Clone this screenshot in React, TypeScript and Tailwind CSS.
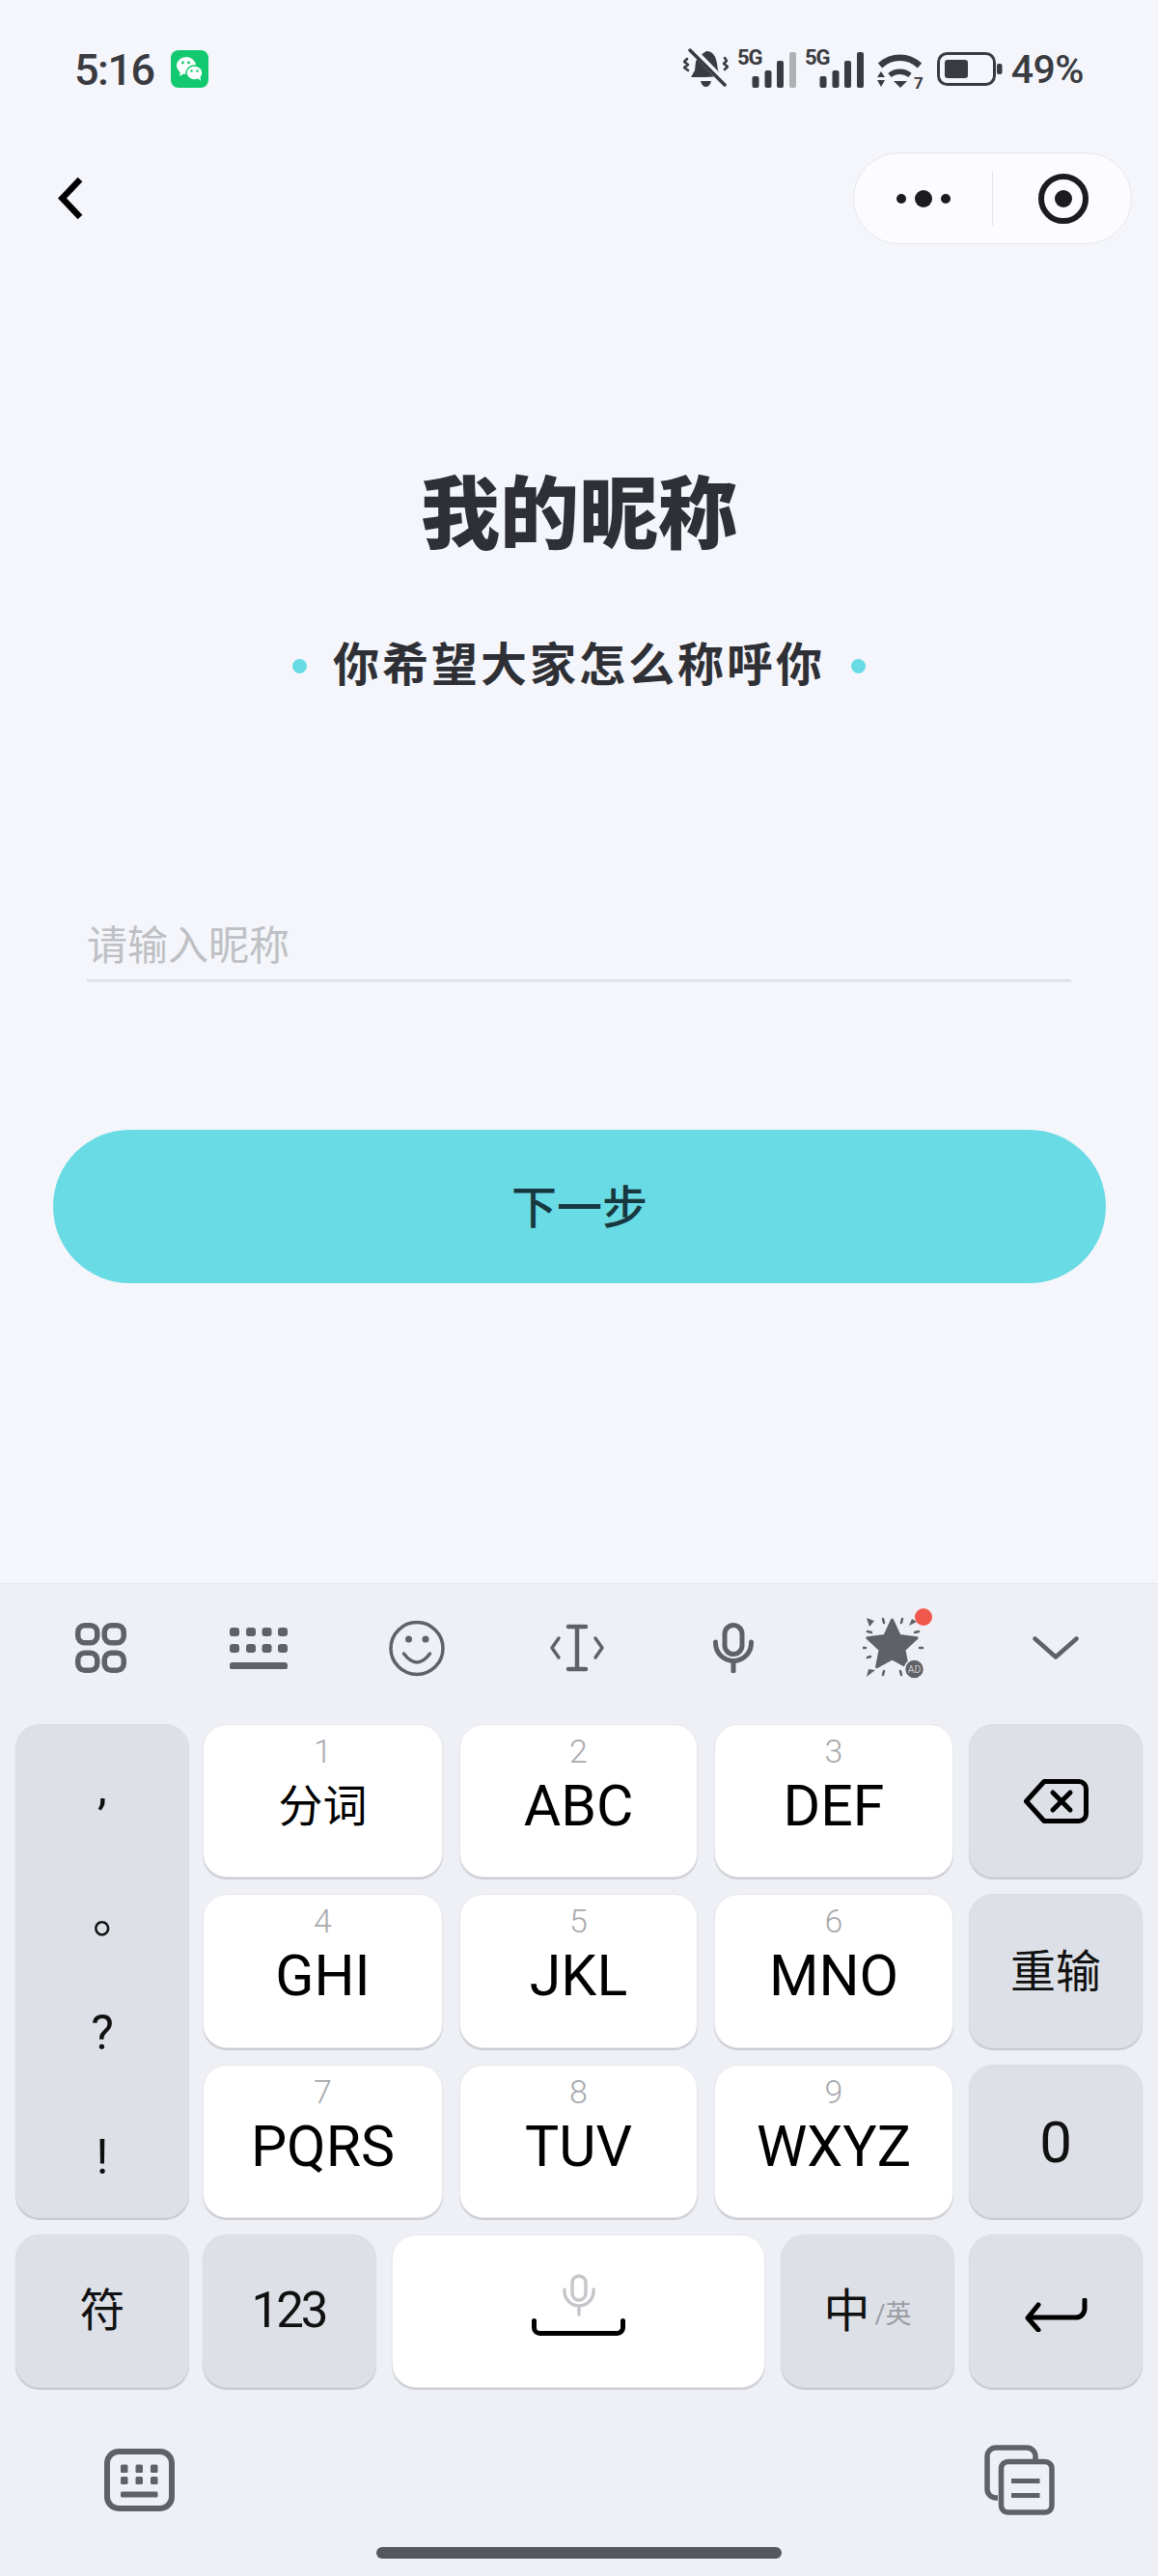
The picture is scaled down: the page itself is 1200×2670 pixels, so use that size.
const ICON = "#606167";
const STATUS = "#3a3b40";

const digitKeys = [
  { digit: "1", label: "分词", cjk: true },
  { digit: "2", label: "ABC" },
  { digit: "3", label: "DEF" },
  { digit: "4", label: "GHI" },
  { digit: "5", label: "JKL" },
  { digit: "6", label: "MNO" },
  { digit: "7", label: "PQRS" },
  { digit: "8", label: "TUV" },
  { digit: "9", label: "WXYZ" },
];

const WeChat = () => (
  <svg width="39" height="39" viewBox="0 0 39 39">
    <rect width="39" height="39" rx="8" fill="#12c96f" />
    <ellipse cx="16" cy="16" rx="10" ry="9" fill="#fff" />
    <path d="M10 22l-1 5 5-3z" fill="#fff" />
    <ellipse cx="24.5" cy="23.5" rx="8.5" ry="7.5" fill="#fff" stroke="#12c96f" strokeWidth="1.5" />
    <path d="M28 29l3 3-.5-5z" fill="#fff" />
    <circle cx="12.5" cy="13" r="1.4" fill="#12c96f" />
    <circle cx="18.5" cy="13" r="1.4" fill="#12c96f" />
    <circle cx="21.5" cy="21.5" r="1.2" fill="#12c96f" />
    <circle cx="27.5" cy="21.5" r="1.2" fill="#12c96f" />
  </svg>
);

const MutedBell = () => (
  <svg width="47" height="42" viewBox="0 0 47 42" fill="none" stroke={STATUS}>
    <path d="M24 3c7 0 10 6 11 13l1 7 3 6-16 1H8l4-7 1-9 2-5z" fill={STATUS} stroke="none" />
    <path d="M18 34h11c-1 4-3 6-5.500 6s-4.500-2-5.500-6z" fill={STATUS} stroke="none" />
    <path d="M9 1l36 37" stroke="#f4f6fb" strokeWidth="7" />
    <path d="M7 2l36 36" strokeWidth="3.500" strokeLinecap="round" />
    <path d="M4 11l-3 3 4 3-4 3 4 3" strokeWidth="2.500" strokeLinecap="round" strokeLinejoin="round" />
    <path d="M43 10l2 3-3 3 4 3-3 3" strokeWidth="2.500" strokeLinecap="round" strokeLinejoin="round" />
  </svg>
);

const Signal = ({ lastColor }: { lastColor: string }) => (
  <svg className="overflow-visible" width="61" height="41" viewBox="0 0 61 41">
    <text x="0" y="16" fontSize="22" fontWeight="700" fontFamily="Roboto" fill={STATUS} letterSpacing="-1">
      5G
    </text>
    <rect x="15.500" y="28" width="7" height="12" rx="2" fill={STATUS} />
    <rect x="28.500" y="22" width="7" height="18" rx="2" fill={STATUS} />
    <rect x="41" y="12" width="7" height="28" rx="2" fill={STATUS} />
    <rect x="54" y="3" width="7" height="37" rx="2" fill={lastColor} />
  </svg>
);

const Wifi = () => (
  <svg className="overflow-visible" width="49" height="37" viewBox="0 0 49 37" fill="none">
    <path d="M4 13C16 2 33 2 45 13" stroke={STATUS} strokeWidth="6.500" />
    <path d="M14 23c6-5 15-5 21 0" stroke={STATUS} strokeWidth="5.500" />
    <path d="M18 29h14l-7 7z" fill={STATUS} />
    <path d="M1 25h8l-4-6zM1 28h8l-4 7z" fill={STATUS} />
    <text x="39" y="37" fontSize="17" fontWeight="700" fontFamily="Roboto" fill={STATUS}>
      7
    </text>
  </svg>
);

const Battery = () => (
  <svg width="68" height="35" viewBox="0 0 68 35" fill="none">
    <rect x="1.500" y="1.500" width="58" height="32" rx="9" stroke={STATUS} strokeWidth="3" />
    <rect x="8" y="8" width="24" height="19" rx="3" fill={STATUS} />
    <rect x="62" y="12" width="5.500" height="11" rx="2" fill={STATUS} />
  </svg>
);

const Back = () => (
  <svg width="26" height="45" viewBox="0 0 26 45" fill="none">
    <path d="M23 3L4.500 22.500 23 42" stroke="#000" strokeWidth="6.500" strokeLinecap="butt" strokeLinejoin="miter" />
  </svg>
);

const StatusBar = () => (
  <div className="mt-[50px] flex h-[42px] items-center justify-between pl-[77px] pr-[77px]">
    <div className="flex items-center">
      <span className="pt-[2px] text-[45px] font-medium leading-none tracking-[-1.5px] text-[#3a3b40]">5:16</span>
      <div className="ml-[17px]">
        <WeChat />
      </div>
    </div>
    <div className="flex items-center">
      <MutedBell />
      <div className="ml-[9px]">
        <Signal lastColor="#b0b1b5" />
      </div>
      <div className="ml-[9px]">
        <Signal lastColor={STATUS} />
      </div>
      <div className="ml-[13px] pt-[5px]">
        <Wifi />
      </div>
      <div className="ml-[14px]">
        <Battery />
      </div>
      <span className="ml-[9px] pt-[3px] text-[41px] font-medium leading-none tracking-[-0.5px] text-[#3a3b40]">49%</span>
    </div>
  </div>
);

const Capsule = () => (
  <div className="flex h-[95px] w-[289px] items-center rounded-full border border-[#e6e7eb] bg-[#fcfcfe]">
    <div className="flex w-[143px] items-center justify-center gap-[9px]">
      <span className="h-[10px] w-[10px] rounded-full bg-[#1c1c1f]" />
      <span className="h-[18px] w-[18px] rounded-full bg-[#1c1c1f]" />
      <span className="h-[10px] w-[10px] rounded-full bg-[#1c1c1f]" />
    </div>
    <div className="h-[57px] w-px bg-[#e4e5e9]" />
    <div className="flex flex-1 items-center justify-center pl-[2px]">
      <div className="flex h-[52px] w-[52px] items-center justify-center rounded-full border-[6px] border-[#1c1c1f]">
        <span className="h-[18px] w-[18px] rounded-full bg-[#1c1c1f]" />
      </div>
    </div>
  </div>
);

const GridIcon = () => (
  <svg width="53" height="52" viewBox="0 0 53 52" fill="none" stroke={ICON} strokeWidth="5.500">
    <rect x="2.750" y="2.750" width="20" height="18" rx="7" />
    <rect x="30.250" y="2.750" width="20" height="18" rx="7" />
    <rect x="2.750" y="31.250" width="20" height="18" rx="7" />
    <rect x="30.250" y="31.250" width="20" height="18" rx="7" />
  </svg>
);

const KeyboardLines = () => (
  <svg width="60" height="43" viewBox="0 0 60 43" fill={ICON}>
    {[0, 17, 33.5, 50].map((x) => (
      <g key={x}>
        <rect x={x} y="0" width="10" height="9" rx="3" />
        <rect x={x} y="17" width="10" height="9" rx="3" />
      </g>
    ))}
    <rect x="0" y="36" width="60" height="7.500" rx="3" />
  </svg>
);

const Smile = () => (
  <svg width="58" height="59" viewBox="0 0 58 59" fill="none" stroke={ICON} strokeWidth="3.500">
    <circle cx="29" cy="29.500" r="27" />
    <circle cx="20.500" cy="20" r="3.500" fill={ICON} stroke="none" />
    <circle cx="38" cy="20" r="3.500" fill={ICON} stroke="none" />
    <path d="M15.500 35Q29 53 42.500 35" strokeLinecap="round" />
  </svg>
);

const CursorIcon = () => (
  <svg width="58" height="50" viewBox="0 0 58 50" fill="none" stroke={ICON} strokeLinecap="round">
    <path d="M20 3h9v44h-9M38 3h-9M38 47h-9" strokeWidth="4.500" strokeLinejoin="round" />
    <path d="M10 15l-7 10 7 10M48 15l7 10-7 10" strokeWidth="3.500" strokeLinejoin="round" />
  </svg>
);

const Mic = () => (
  <svg width="42" height="52" viewBox="0 0 42 52" fill="none" stroke={ICON} strokeWidth="5" strokeLinecap="round">
    <rect x="12" y="2.500" width="18" height="30" rx="9" />
    <path d="M2.500 20v1a18.500 18.500 0 0 0 37 0v-1M21 40v10" />
  </svg>
);

const AdStar = () => (
  <svg width="72" height="84" viewBox="0 0 72 84" fill={ICON} stroke="none">
    <path
      d="M30.500 13L38.100 29.500 56.200 31.700 42.900 44 46.400 61.800 30.500 53 14.600 61.800 18.100 44 4.800 31.700 22.900 29.500Z"
      stroke={ICON}
      strokeWidth="3"
      strokeLinejoin="round"
    />
    <path d="M4 11l8 3-5 6zM4 72l2-8 7 1zM48 19l3-7 5 3z" />
    <g stroke={ICON} strokeWidth="2.500" strokeLinecap="round">
      <path d="M21 12l1 4M41 12l-1 4M5 25l4 1M58 25l-4 1M0 42h3M59 42h3M5 52l3-1M21 70l1-4M40 70l-1-4" />
    </g>
    <circle cx="63" cy="10" r="9" fill="#f0584b" />
    <circle cx="53.500" cy="64" r="10" stroke="#eef0f5" strokeWidth="1.500" />
    <text x="53.500" y="68" textAnchor="middle" fontSize="10.500" fontFamily="Roboto" fill="#c8c9cd">
      AD
    </text>
  </svg>
);

const ChevronDown = () => (
  <svg width="48" height="24" viewBox="0 0 48 24" fill="none">
    <path d="M2.500 2.500L24 21.500 45.500 2.500" stroke={ICON} strokeWidth="4.500" strokeLinecap="round" strokeLinejoin="round" />
  </svg>
);

const Backspace = () => (
  <svg width="67" height="46" viewBox="0 0 67 46" fill="none" stroke="#000" strokeWidth="5" strokeLinecap="round" strokeLinejoin="round">
    <path d="M21 2.500h36a7.500 7.500 0 0 1 7.500 7.500v26a7.500 7.500 0 0 1-7.500 7.500H21L2.500 23z" />
    <path d="M30 14l18 18M48 14L30 32" />
  </svg>
);

const Enter = () => (
  <svg width="65" height="35" viewBox="0 0 65 35" fill="none" stroke="#000" strokeWidth="5" strokeLinecap="round" strokeLinejoin="round">
    <path d="M62 2v9a9 9 0 0 1-9 9H4" />
    <path d="M14 7L3 20.500 14 33" />
  </svg>
);

const SpaceGlyph = () => (
  <div className="flex flex-col items-center">
    <svg width="34" height="44" viewBox="0 0 34 44" fill="none" stroke="#c6c7cb" strokeWidth="3.500" strokeLinecap="round">
      <rect x="10" y="2" width="14" height="25" rx="7" />
      <path d="M2 16v2a15 15 0 0 0 30 0v-2M17 34v8" />
    </svg>
    <svg className="mt-[2px]" width="97" height="18" viewBox="0 0 97 18" fill="none" stroke="#000" strokeWidth="5" strokeLinecap="round">
      <path d="M2.500 2.500v7a6 6 0 0 0 6 6h80a6 6 0 0 0 6-6v-7" />
    </svg>
  </div>
);

const KeyboardSmall = () => (
  <svg width="73" height="65" viewBox="0 0 73 65" fill="none">
    <rect x="3" y="3" width="67" height="59" rx="12" stroke={ICON} strokeWidth="6" />
    {[17, 32.5, 48].map((x) => (
      <g key={x} fill={ICON}>
        <rect x={x} y="16.500" width="7.500" height="8.500" rx="1.500" />
        <rect x={x} y="29" width="7.500" height="8" rx="1.500" />
      </g>
    ))}
    <rect x="17" y="44.500" width="38.500" height="6" rx="1.500" fill={ICON} />
  </svg>
);

const CopyIcon = () => (
  <svg width="73" height="73" viewBox="0 0 73 73" fill="none" stroke={ICON} strokeWidth="5.500">
    <path d="M14 55h-2a9 9 0 0 1-9-9V12a9 9 0 0 1 9-9h32a9 9 0 0 1 9 9v3" />
    <rect x="17.500" y="17.500" width="52.500" height="52.500" rx="7" />
    <rect x="28" y="35" width="29.500" height="5" fill={ICON} stroke="none" />
    <rect x="28" y="50" width="29.500" height="5" fill={ICON} stroke="none" />
  </svg>
);

const whiteKey = "bg-white rounded-[25px] border border-[#e8e9ed] shadow-[0_2px_1px_#c9cbd1]";
const grayKey = "bg-[#dde0e7] rounded-[25px] border border-[#dcdde2] shadow-[0_2px_1px_#c6c8cf]";

const App = () => {
  return (
    <div className="flex h-[2670px] w-[1200px] flex-col overflow-hidden bg-[#f4f6fb] font-[Roboto,'Noto_Sans_CJK_SC',sans-serif]">
      <StatusBar />

      <div className="mt-[66px] flex items-center justify-between pl-[60px] pr-[27px]">
        <Back />
        <Capsule />
      </div>

      <h1 className="mt-[231px] text-center text-[82px] font-black leading-[100px] text-[#2f3035]">我的昵称</h1>

      <div className="mt-[76px] flex h-[60px] items-center justify-center">
        <span className="h-[15px] w-[15px] rounded-full bg-[#69dbe4]" />
        <p className="mx-[27px] text-[48px] font-semibold leading-[60px] tracking-[3px] text-[#2f3035]">你希望大家怎么称呼你</p>
        <span className="h-[15px] w-[15px] rounded-full bg-[#69dbe4]" />
      </div>

      <div className="mx-[90px] mt-[240px] h-[58px] border-b-[3px] border-[#e2e3e8] text-[42px] leading-[42px] text-[#bfc0c4]">
        请输入昵称
      </div>

      <button className="mx-[55px] mt-[153px] flex h-[159px] w-[1091px] items-center justify-center rounded-full bg-[#69dbe4] pt-[3px] text-[47px] font-medium text-[#18383f]">
        下一步
      </button>

      <div className="mt-auto flex h-[1029px] flex-col border-t border-[#e3e5ea] bg-[#eef0f5]">
        <div className="mb-[13px] flex h-[132px] items-center pl-[78px]">
          <GridIcon />
          <div className="ml-[107px]">
            <KeyboardLines />
          </div>
          <div className="ml-[105px]">
            <Smile />
          </div>
          <div className="ml-[108px]">
            <CursorIcon />
          </div>
          <div className="ml-[112px]">
            <Mic />
          </div>
          <div className="ml-[113px]">
            <AdStar />
          </div>
          <div className="ml-[104px]">
            <ChevronDown />
          </div>
        </div>

        <div className="flex h-[512px] pl-[16px]">
          <div className={`grid w-[180px] grid-rows-4 text-center text-[50px] leading-none text-[#111] ${grayKey}`}>
            <span className="flex items-center justify-center">,</span>
            <span className="flex items-center justify-center pl-[30px] pt-[4px] font-['Noto_Sans_CJK_SC']">。</span>
            <span className="flex items-center justify-center">?</span>
            <span className="flex items-center justify-center pt-[3px]">!</span>
          </div>

          <div className="ml-[14px] grid grid-cols-[249px_247px_248px] grid-rows-3 gap-x-[17px] gap-y-[17px]">
            {digitKeys.map((k) => (
              <div key={k.digit} className={`flex flex-col items-center pt-[10px] ${whiteKey}`}>
                <span className="text-[34px] font-light leading-[34px] text-[#a8a9ad]">{k.digit}</span>
                <span className={`mt-[10px] leading-[60px] text-black ${k.cjk ? "text-[46px]" : "text-[59px]"}`}>
                  {k.label}
                </span>
              </div>
            ))}
          </div>

          <div className="ml-[16px] grid w-[180px] grid-rows-3 gap-y-[17px]">
            <div className={`flex items-center justify-center ${grayKey}`}>
              <Backspace />
            </div>
            <div className={`flex items-center justify-center pt-[3px] text-[47px] text-[#111] ${grayKey}`}>重输</div>
            <div className={`flex items-center justify-center pt-[4px] text-[60px] text-[#111] ${grayKey}`}>0</div>
          </div>
        </div>

        <div className="mt-[17px] flex h-[159px] pl-[16px]">
          <div className={`flex w-[180px] items-center justify-center text-[47px] text-[#111] ${grayKey}`}>符</div>
          <div className={`ml-[14px] flex w-[180px] items-center justify-center pr-[2px] text-[51px] tracking-[-3px] text-[#111] ${grayKey}`}>
            123
          </div>
          <div className={`ml-[16px] flex w-[387px] justify-center pt-[40px] ${whiteKey}`}>
            <SpaceGlyph />
          </div>
          <div className={`ml-[16px] flex w-[180px] items-center justify-center ${grayKey}`}>
            <span className="text-[48px] text-[#111]">中</span>
            <span className="ml-[5px] mt-[8px] text-[27px] text-[#9b9da3]">/英</span>
          </div>
          <div className={`ml-[15px] flex w-[180px] items-center justify-center pt-[8px] ${grayKey}`}>
            <Enter />
          </div>
        </div>

        <div className="mt-[59px] flex items-center justify-between pl-[108px] pr-[107px]">
          <KeyboardSmall />
          <CopyIcon />
        </div>

        <div className="mx-auto mt-[33px] h-[12px] w-[420px] rounded-full bg-[#56575c]" />
      </div>
    </div>
  );
};

export default App;
